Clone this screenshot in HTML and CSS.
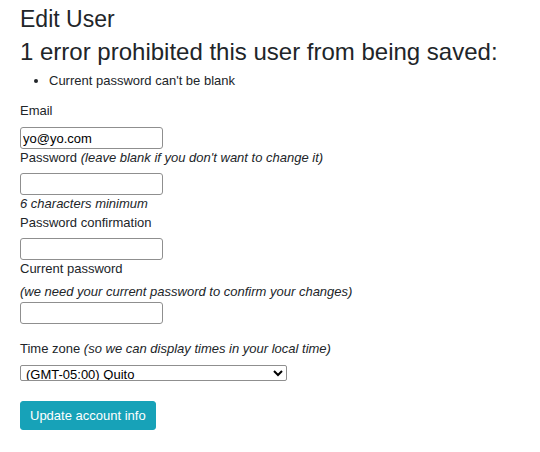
FILE: index.html
```html
<!DOCTYPE html>
<html>
<head>
  <meta charset="UTF-8">
  <title>Edit User</title>
  <link rel="stylesheet" href="styles.css">
</head>
<body>
<div class="page">
  <h2 class="title">Edit User</h2>

  <div class="errors">
    <h2>1 error prohibited this user from being saved:</h2>
    <ul>
      <li>Current password can't be blank</li>
    </ul>
  </div>

  <form class="userForm">
    <div class="field field-email">
      <label for="email">Email</label>
      <input type="email" id="email" value="yo@yo.com">
    </div>

    <div class="field field-password">
      <label for="password">Password <i>(leave blank if you don't want to change it)</i></label>
      <input type="password" id="password">
      <em class="hint">6 characters minimum</em>
    </div>

    <div class="field field-confirm">
      <label for="password_confirmation">Password confirmation</label>
      <input type="password" id="password_confirmation">
    </div>

    <div class="field field-current">
      <label for="current_password">Current password</label>
      <i class="note">(we need your current password to confirm your changes)</i>
      <input type="password" id="current_password">
    </div>

    <div class="field field-zone">
      <label for="time_zone">Time zone <i>(so we can display times in your local time)</i></label>
      <select id="time_zone">
        <option>(GMT-05:00) Quito</option>
      </select>
    </div>

    <div class="actions">
      <button type="button" class="btn">Update account info</button>
    </div>
  </form>
</div>
</body>
</html>
```

FILE: styles.css
```css
body {
  margin: 0;
  font-family: "Liberation Sans", Arial, sans-serif;
  color: #212529;
  background: #fff;
}
.page {
  padding: 5px 20px 20px;
}
h2 {
  font-weight: 500;
  margin: 0;
}
.title {
  font-size: 23px;
  line-height: 28px;
}
.errors h2 {
  font-size: 24px;
  line-height: 28px;
  margin-top: 5px;
}
.errors ul {
  margin: 7px 0 0;
  padding-left: 29px;
  font-size: 13px;
  line-height: 16px;
}
.userForm {
  display: flex;
  flex-direction: column;
  font-size: 13px;
  line-height: 16px;
}
.field {
  display: flex;
  flex-direction: column;
  align-items: flex-start;
}
.field input {
  width: 143px;
  height: 22px;
  box-sizing: border-box;
  border: 1px solid #8f8f8f;
  border-radius: 3px;
  padding: 1px 2px;
  font: 13px "Liberation Sans", Arial, sans-serif;
  color: #000;
  margin: 0;
}
.field-email {
  margin-top: 14px;
}
.field-email label {
  margin-bottom: 8px;
}
.field-password {
  margin-top: 1px;
}
.field-password label {
  margin-bottom: 7px;
}
.field-password .hint {
  margin-top: 1px;
}
.field-confirm {
  margin-top: 3px;
}
.field-confirm label {
  margin-bottom: 7px;
}
.field-current {
  margin-top: 1px;
}
.field-current .note {
  margin-top: 7px;
  margin-bottom: 2px;
}
.field-zone {
  margin-top: 17px;
}
.field-zone select {
  margin-top: 8px;
  width: 267px;
  height: 16px;
  font: 13px "Liberation Sans", Arial, sans-serif;
  border: 1px solid #8f8f8f;
  border-radius: 2px;
  padding: 0 1px;
  background: #fff;
  color: #000;
}
.actions {
  margin-top: 20px;
}
.btn {
  background-color: #17a2b8;
  color: #fff;
  border: 1px solid #17a2b8;
  border-radius: 3px;
  font: 13px "Liberation Sans", Arial, sans-serif;
  height: 29px;
  padding: 0 9px;
}
```
